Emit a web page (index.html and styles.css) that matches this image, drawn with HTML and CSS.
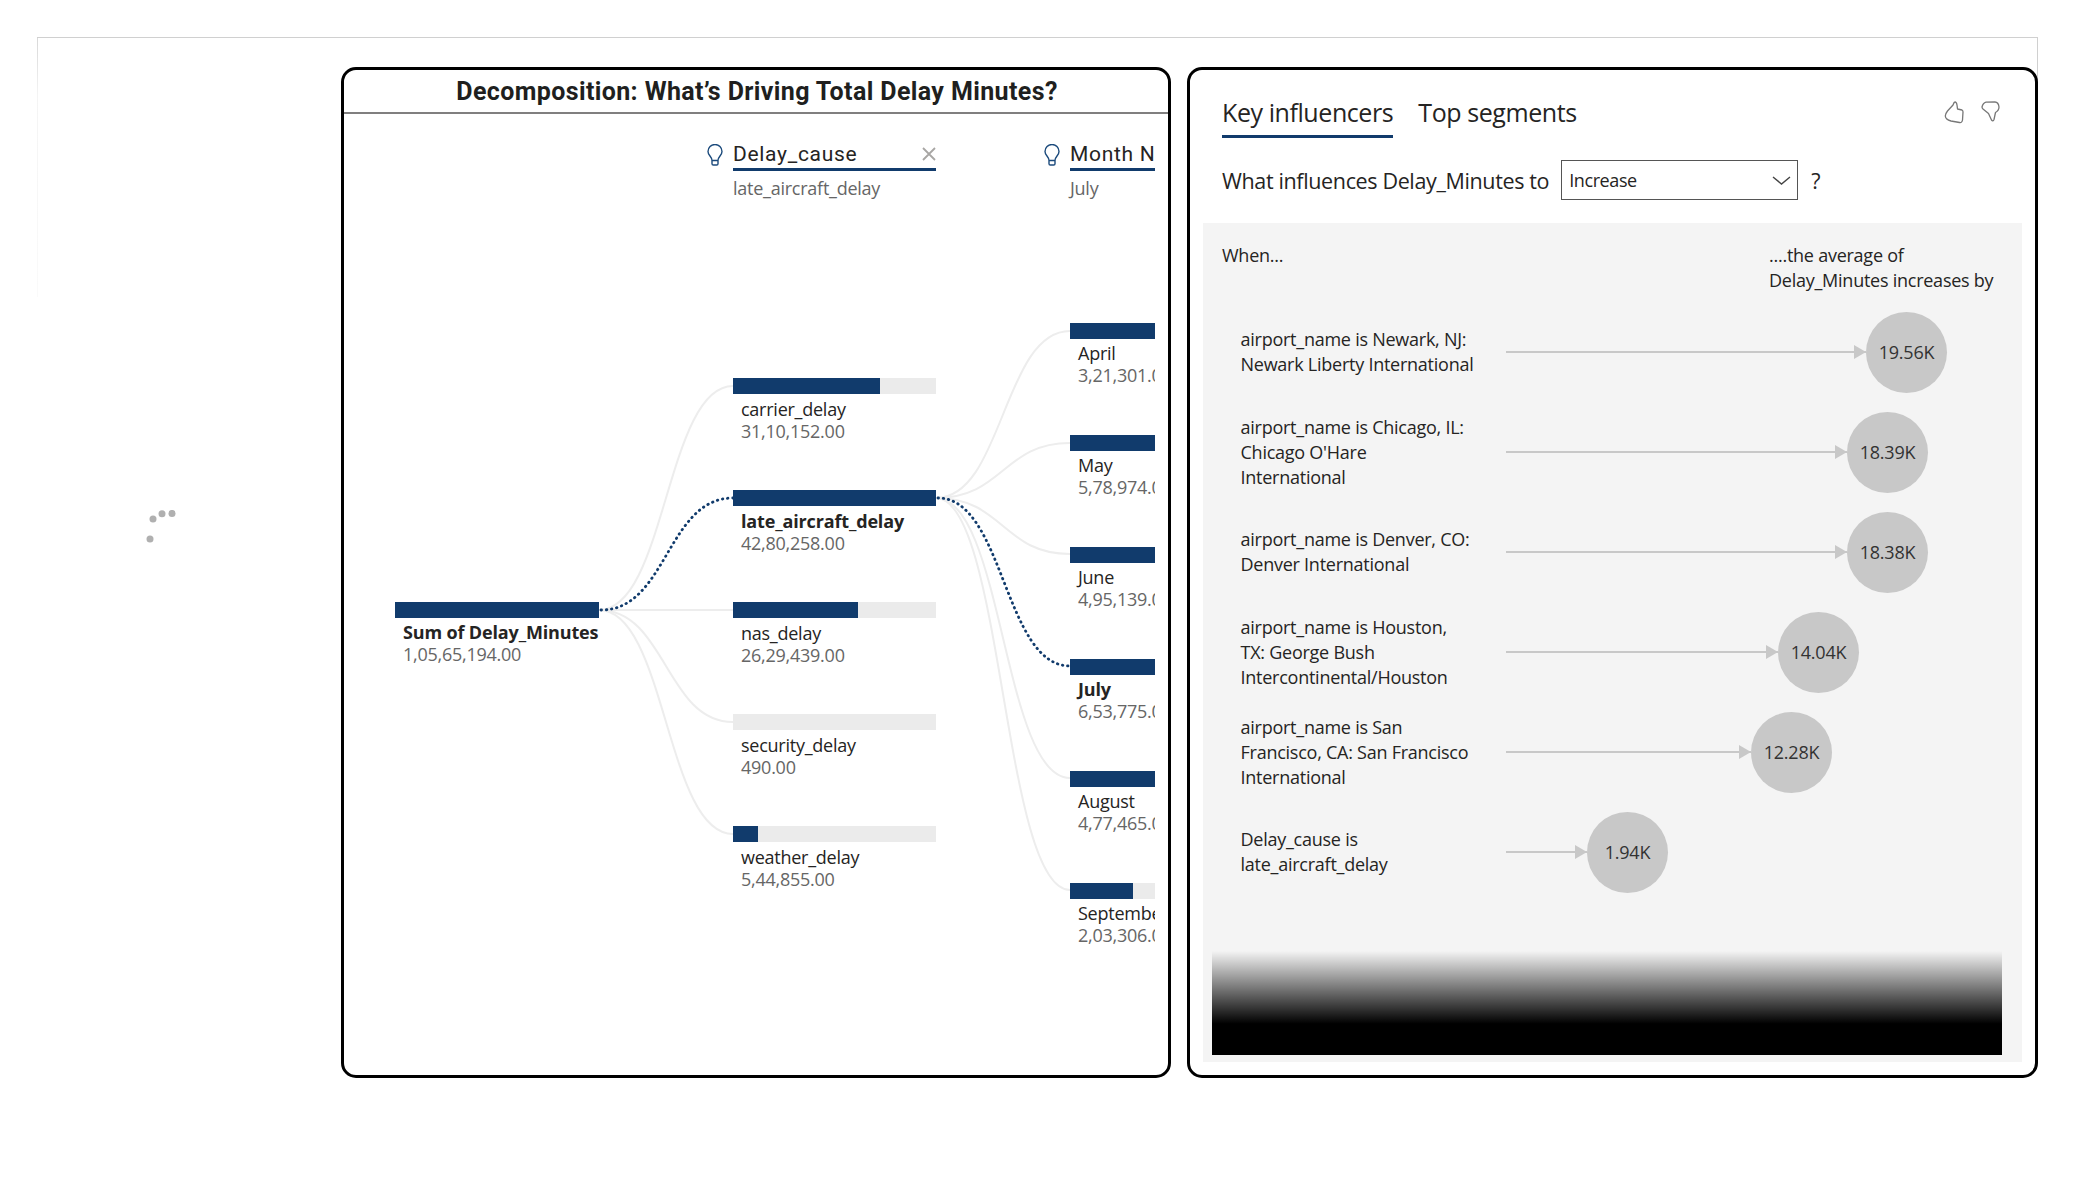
FILE: index.html
```html
<!DOCTYPE html>
<html lang="en">
<head>
<meta charset="UTF-8">
<title>Delay Minutes Report</title>
<link rel="stylesheet" href="styles.css">
</head>
<body>

<div class="frame"></div>

<!-- loading dots of the visual that has not rendered yet -->
<svg class="spinner" width="40" height="40" viewBox="0 0 40 40">
  <circle cx="13" cy="9" r="3.5"/>
  <circle cx="22" cy="3.7" r="3.5"/>
  <circle cx="32" cy="3.4" r="3.5"/>
  <circle cx="10" cy="29" r="3.5"/>
</svg>

<div class="dashboard">

  <div class="panel">
    <div class="panel-title">Decomposition: What’s Driving Total Delay Minutes?</div>

    <!-- viewBox uses page coordinates so the links line up with the bars -->
    <svg class="links" viewBox="341 67 830 1011">
      <path d="M599 610C666 610 666 386 733 386"/>
      <path d="M599 610H733"/>
      <path d="M599 610C666 610 666 722 733 722"/>
      <path d="M599 610C666 610 666 834 733 834"/>
      <path d="M936 498C1003 498 1003 331 1070 331"/>
      <path d="M936 498C1003 498 1003 443 1070 443"/>
      <path d="M936 498C1003 498 1003 554 1070 554"/>
      <path d="M936 498C1003 498 1003 778 1070 778"/>
      <path d="M936 498C1003 498 1003 890 1070 890"/>
      <path class="link-on" d="M601 610C667 610 667 498 733 498"/>
      <path class="link-on" d="M938 498C1004 498 1004 666 1070 666"/>
    </svg>

    <div class="tree">
      <div class="level level-root">
        <div class="node">
          <div class="bar bar-on"><div class="fill fill-all"></div></div>
          <div class="node-name strong">Sum of Delay_Minutes</div>
          <div class="node-value">1,05,65,194.00</div>
        </div>
      </div>

      <div class="level level-cause">
        <div class="level-head">
          <svg class="bulb" width="16" height="22" viewBox="0 0 16 22"><path d="M5 16.5C5 12.5 1 11.5 1 7.5a7 7 0 0 1 14 0C15 11.5 11 12.500 11 16.500zM5 16.500v3.200q0 1.300 1.300 1.300h3.400q1.300 0 1.300-1.300v-3.200"/></svg>
          <div class="level-title">
            <span>Delay_cause</span>
            <svg class="close" width="14" height="14" viewBox="0 0 14 14"><path d="M1 1l12 12M13 1L1 13"/></svg>
          </div>
        </div>
        <div class="level-sub">late_aircraft_delay</div>
        <div class="nodes nodes-cause">
          <div class="node">
            <div class="bar"><div class="fill fill-carrier"></div></div>
            <div class="node-name">carrier_delay</div>
            <div class="node-value">31,10,152.00</div>
          </div>
          <div class="node">
            <div class="bar bar-on"><div class="fill fill-all"></div></div>
            <div class="node-name strong">late_aircraft_delay</div>
            <div class="node-value">42,80,258.00</div>
          </div>
          <div class="node">
            <div class="bar"><div class="fill fill-nas"></div></div>
            <div class="node-name">nas_delay</div>
            <div class="node-value">26,29,439.00</div>
          </div>
          <div class="node">
            <div class="bar"></div>
            <div class="node-name">security_delay</div>
            <div class="node-value">490.00</div>
          </div>
          <div class="node">
            <div class="bar"><div class="fill fill-weather"></div></div>
            <div class="node-name">weather_delay</div>
            <div class="node-value">5,44,855.00</div>
          </div>
        </div>
      </div>

      <div class="level level-month">
        <div class="level-head">
          <svg class="bulb" width="16" height="22" viewBox="0 0 16 22"><path d="M5 16.5C5 12.5 1 11.5 1 7.5a7 7 0 0 1 14 0C15 11.5 11 12.500 11 16.500zM5 16.500v3.200q0 1.300 1.300 1.300h3.400q1.300 0 1.300-1.300v-3.200"/></svg>
          <div class="level-title"><span>Month Name</span></div>
        </div>
        <div class="level-sub">July</div>
        <div class="nodes nodes-month">
          <div class="node">
            <div class="bar"><div class="fill fill-all"></div></div>
            <div class="node-name">April</div>
            <div class="node-value">3,21,301.00</div>
          </div>
          <div class="node">
            <div class="bar"><div class="fill fill-all"></div></div>
            <div class="node-name">May</div>
            <div class="node-value">5,78,974.00</div>
          </div>
          <div class="node">
            <div class="bar"><div class="fill fill-all"></div></div>
            <div class="node-name">June</div>
            <div class="node-value">4,95,139.00</div>
          </div>
          <div class="node">
            <div class="bar bar-on"><div class="fill fill-all"></div></div>
            <div class="node-name strong">July</div>
            <div class="node-value">6,53,775.00</div>
          </div>
          <div class="node">
            <div class="bar"><div class="fill fill-all"></div></div>
            <div class="node-name">August</div>
            <div class="node-value">4,77,465.00</div>
          </div>
          <div class="node">
            <div class="bar"><div class="fill fill-sep"></div></div>
            <div class="node-name">September</div>
            <div class="node-value">2,03,306.00</div>
          </div>
        </div>
      </div>
    </div>
  </div>

  <div class="panel panel-ki">
    <div class="tabs">
      <div class="tab tab-on">Key influencers</div>
      <div class="tab">Top segments</div>
      <div class="thumbs">
        <svg width="20" height="23" viewBox="0 0 20 23"><path d="M11 1Q12.500 1 13 4L13.500 8L18 9Q19 9.500 19 11L18.500 19Q18 22 15.500 21.500L7 20Q1.500 18.500 1.300 15Q1.500 12.500 3.500 10L9 4Q10 1 11 1Z"/></svg>
        <svg width="19" height="22" viewBox="0 0 19 22"><path d="M1 6Q2 2 5 1.200L14 1Q17.500 1.200 18 6Q18 9.500 14.500 11.500L13 18.500Q12 21 10.500 19L7.500 12.500L2 8Q1 7 1 6Z"/></svg>
      </div>
    </div>

    <div class="question">
      <span>What influences Delay_Minutes to</span>
      <div class="dropdown">
        <span>Increase</span>
        <svg width="19" height="9" viewBox="0 0 19 9"><path d="M1 1l8.500 7L18 1"/></svg>
      </div>
      <span class="question-mark">?</span>
    </div>

    <div class="ki-body">
      <div class="ki-head">
        <div>When...</div>
        <div class="ki-head-right">....the average of<br>Delay_Minutes increases by</div>
      </div>

      <div class="ki-row">
        <div class="ki-label">airport_name is Newark, NJ:<br>Newark Liberty International</div>
        <div class="ki-link" style="width:360px"></div>
        <div class="ki-bubble">19.56K</div>
      </div>
      <div class="ki-row">
        <div class="ki-label">airport_name is Chicago, IL:<br>Chicago O'Hare<br>International</div>
        <div class="ki-link" style="width:341px"></div>
        <div class="ki-bubble">18.39K</div>
      </div>
      <div class="ki-row">
        <div class="ki-label">airport_name is Denver, CO:<br>Denver International</div>
        <div class="ki-link" style="width:341px"></div>
        <div class="ki-bubble">18.38K</div>
      </div>
      <div class="ki-row">
        <div class="ki-label">airport_name is Houston,<br>TX: George Bush<br>Intercontinental/Houston</div>
        <div class="ki-link" style="width:272px"></div>
        <div class="ki-bubble">14.04K</div>
      </div>
      <div class="ki-row">
        <div class="ki-label">airport_name is San<br>Francisco, CA: San Francisco<br>International</div>
        <div class="ki-link" style="width:245px"></div>
        <div class="ki-bubble">12.28K</div>
      </div>
      <div class="ki-row">
        <div class="ki-label">Delay_cause is<br>late_aircraft_delay</div>
        <div class="ki-link" style="width:81px"></div>
        <div class="ki-bubble">1.94K</div>
      </div>

      <div class="ki-fade"></div>
    </div>
  </div>

</div>

</body>
</html>
```

FILE: styles.css
```css
* {
  box-sizing: border-box;
}

body {
  margin: 0;
  height: 1200px;
  overflow: hidden;
  position: relative;
  background-color: #fff;
  font-family: "Open Sans", sans-serif;
  font-size: 18px;
  letter-spacing: -0.25px;
  color: #252423;
}

/* thin page frame behind the visuals */
.frame {
  position: absolute;
  left: 37px;
  top: 37px;
  width: 2001px;
  height: 260px;
  border-top: 1px solid #d0d0d0;
  border-right: 1px solid #d0d0d0;
}

.frame::before {
  content: "";
  position: absolute;
  left: 0;
  top: 0;
  width: 1px;
  height: 100%;
  background: linear-gradient(#d8d8d8, #f4f4f4 22%, #fafafa);
}

.spinner {
  position: absolute;
  left: 140px;
  top: 510px;
  fill: #b0b0b0;
}

.dashboard {
  display: flex;
  gap: 16px;
  padding: 67px 0 0 341px;
}

.panel {
  position: relative;
  width: 830px;
  height: 1011px;
  background-color: #fff;
  border: 3px solid #000;
  border-radius: 15px;
}

.panel-ki {
  width: 851px;
}

.panel-title {
  height: 44px;
  border-bottom: 2px solid #807f7f;
  padding: 2px 0 0 2px;
  text-align: center;
  font-family: Roboto, sans-serif;
  font-size: 25px;
  font-weight: 700;
  line-height: 40px;
  letter-spacing: 0.38px;
  color: #201f1e;
}

/* decomposition tree */
.links {
  position: absolute;
  left: -3px;
  top: -3px;
  width: 830px;
  height: 1011px;
  fill: none;
  stroke: #ededed;
  stroke-width: 2;
}

.links .link-on {
  stroke: #113b6c;
  stroke-width: 2.8;
  stroke-linecap: round;
  stroke-dasharray: 0.5 4.7;
}

.tree {
  position: relative;
  display: flex;
  gap: 134px;
  padding-left: 51px;
}

.level-root {
  width: 204px;
  padding-top: 488px;
}

.level-cause {
  width: 203px;
  padding-top: 27px;
}

.level-month {
  width: 85px;
  padding-top: 27px;
}

.level-head {
  display: flex;
  gap: 10px;
  height: 30px;
  margin-left: -26px;
}

.bulb {
  flex: none;
  margin-top: 3px;
  fill: none;
  stroke: #1b4a7c;
  stroke-width: 1.4;
}

.level-title {
  flex: 1;
  display: flex;
  justify-content: space-between;
  overflow: hidden;
  white-space: nowrap;
  border-bottom: 3px solid #113b6c;
  font-family: Roboto, sans-serif;
  font-size: 21px;
  line-height: 26px;
  letter-spacing: 0.7px;
  color: #252423;
}

.close {
  flex: none;
  margin-top: 6px;
  fill: none;
  stroke: #a8a6a4;
  stroke-width: 1.8;
}

.level-sub {
  height: 30px;
  padding-top: 2px;
  line-height: 30px;
  color: #666;
}

.nodes-cause {
  padding-top: 177px;
}

.nodes-month {
  padding-top: 122px;
}

.node {
  height: 112px;
  overflow: hidden;
}

.bar {
  height: 16px;
  background-color: #ebebeb;
}

.bar-on {
  box-shadow: inset 0 0 0 1px #6f8cab;
}

.fill {
  height: 100%;
  background-color: #113b6c;
}

.bar-on .fill {
  background-color: transparent;
  box-shadow: inset 0 0 0 16px #113b6c;
}

.fill-all { width: 100%; }
.fill-carrier { width: 147px; }
.fill-nas { width: 125px; }
.fill-weather { width: 25px; }
.fill-sep { width: 63px; }

.node-name,
.node-value {
  padding-left: 8px;
  white-space: nowrap;
  line-height: 22px;
}

.node-name {
  margin-top: 3px;
}

.nodes-cause .node-name {
  margin-top: 3.500px;
}

.node-name.strong {
  font-weight: 700;
  letter-spacing: -0.15px;
}

.node-value {
  color: #666;
}

/* key influencers */
.tabs {
  display: flex;
  gap: 25px;
  height: 67px;
  padding: 27px 35px 0 32px;
}

.tab {
  height: 41px;
  font-size: 25px;
  line-height: 31px;
  letter-spacing: -0.42px;
}

.tab-on {
  border-bottom: 3.5px solid #113b6c;
}

.thumbs {
  display: flex;
  align-items: flex-start;
  gap: 17px;
  margin-left: auto;
  padding-top: 4px;
  fill: none;
  stroke: #777;
  stroke-width: 1.3;
  stroke-linejoin: round;
}

.question {
  display: flex;
  align-items: center;
  height: 40px;
  margin-top: 23px;
  padding-left: 32px;
  font-size: 21.5px;
  letter-spacing: -0.36px;
}

.dropdown {
  display: flex;
  align-items: center;
  justify-content: space-between;
  width: 237px;
  height: 40px;
  margin-left: 12px;
  padding: 0 6px 0 7px;
  border: 1.5px solid #555;
  font-size: 18px;
  letter-spacing: -0.4px;
}

.dropdown svg {
  fill: none;
  stroke: #444;
  stroke-width: 1.4;
}

.question-mark {
  margin-left: 13px;
}

.ki-body {
  height: 839px;
  margin: 23px 13px 0;
  padding-top: 20px;
  background-color: #f4f4f4;
}

.ki-head {
  display: flex;
  justify-content: space-between;
  height: 59px;
  padding: 0 0 0 19px;
  line-height: 25px;
}

.ki-head-right {
  width: 253px;
}

.ki-row {
  display: flex;
  align-items: center;
  height: 100px;
  padding-left: 37.500px;
  line-height: 25px;
}

.ki-label {
  flex: none;
  width: 265.500px;
  white-space: nowrap;
}

.ki-link {
  flex: none;
  position: relative;
  height: 2px;
  background-color: #c8c8c8;
}

.ki-link::after {
  content: "";
  position: absolute;
  right: 0;
  top: -6px;
  border-left: 12px solid #c8c8c8;
  border-top: 7px solid transparent;
  border-bottom: 7px solid transparent;
}

.ki-bubble {
  flex: none;
  width: 81px;
  height: 81px;
  border-radius: 50%;
  background-color: #c8c8c8;
  text-align: center;
  line-height: 81px;
  color: #333;
}

.ki-fade {
  height: 104px;
  margin: 49px 20px 0 9px;
  background: linear-gradient(rgba(0, 0, 0, 0), #000 70%);
}
```
